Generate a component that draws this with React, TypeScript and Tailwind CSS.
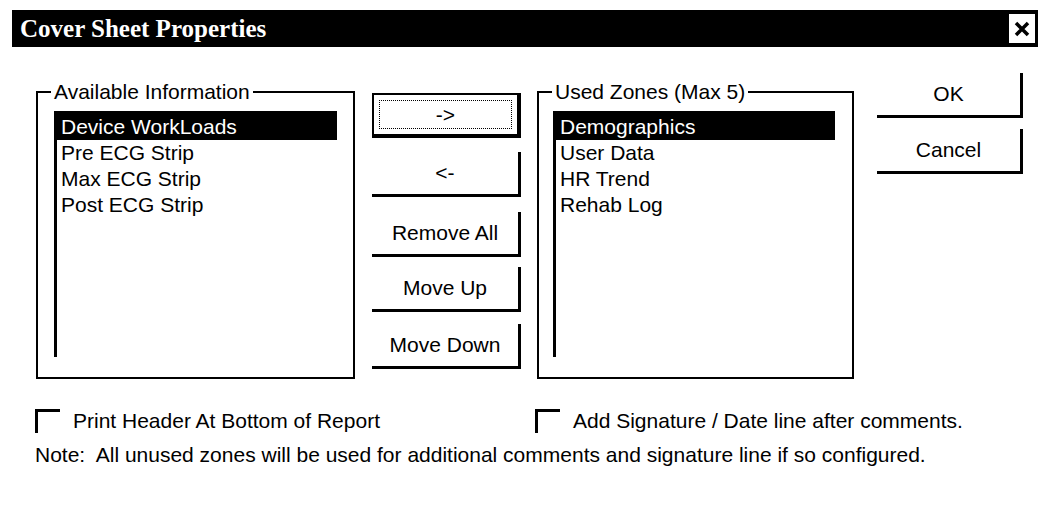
import React from 'react';

const availableItems = ['Device WorkLoads', 'Pre ECG Strip', 'Max ECG Strip', 'Post ECG Strip'];
const usedZones = ['Demographics', 'User Data', 'HR Trend', 'Rehab Log'];

function GroupBox({ title, width, children }: { title: string; width: string; children: React.ReactNode }) {
  return (
    <div className={`relative mt-[21px] h-[288px] border-2 border-black pt-[18px] ${width}`}>
      <span className="absolute -top-[13px] left-[13px] bg-white px-[3px] leading-[24px]">{title}</span>
      {children}
    </div>
  );
}

function ListBox({ items, selected, className }: { items: string[]; selected: number; className: string }) {
  return (
    <div className={`h-[246px] border-l-[3px] border-t-[3px] border-black ${className}`}>
      {items.map((item, i) => (
        <div
          key={item}
          className={`h-[26px] pl-[4px] leading-[26px] whitespace-nowrap ${i === selected ? 'bg-black text-white' : ''}`}
        >
          {item}
        </div>
      ))}
    </div>
  );
}

function Button({ label, className = '' }: { label: string; className?: string }) {
  return (
    <div className={`flex h-[45px] items-center justify-center border-r-[3px] border-b-[3px] border-black ${className}`}>
      {label}
    </div>
  );
}

function Checkbox({ label }: { label: string }) {
  return (
    <div className="flex items-center">
      <div className="h-[24px] w-[25px] border-l-[3px] border-t-[3px] border-black" />
      <span className="ml-[13px]">{label}</span>
    </div>
  );
}

export default function App() {
  return (
    <div className="h-[514px] w-[1038px] bg-white pl-[12px] pt-[10px] font-['Liberation_Sans',Arial,sans-serif] text-[21px] text-black">
      {/* Title bar */}
      <div className="flex h-[37px] items-center justify-between bg-black pl-[8px] pr-[3px]">
        <span className="font-['Liberation_Serif','Times_New_Roman',serif] text-[25px] font-bold text-white">
          Cover Sheet Properties
        </span>
        <div className="flex h-[29px] w-[26px] items-center justify-center bg-white">
          <svg width="16" height="16" viewBox="0 0 16 16">
            <path d="M2 2 L14 14 M14 2 L2 14" stroke="black" strokeWidth="3.5" />
          </svg>
        </div>
      </div>

      <div className="pl-[23px] pt-[23px]">
        <div className="flex items-start">
          <div className="ml-[1px]">
            <GroupBox title="Available Information" width="w-[319px]">
              <ListBox items={availableItems} selected={0} className="ml-[16px] w-[283px]" />
            </GroupBox>
          </div>

          {/* Move buttons */}
          <div className="ml-[17px] mt-[23px] flex w-[149px] flex-col">
            <div className="h-[45px] border-2 border-r-[4px] border-b-[4px] border-black p-[5px]">
              <div className="flex h-full items-center justify-center border border-dotted border-black">-&gt;</div>
            </div>
            <Button label="<-" className="mt-[14px]" />
            <Button label="Remove All" className="mt-[15px]" />
            <Button label="Move Up" className="mt-[10px]" />
            <Button label="Move Down" className="mt-[12px]" />
          </div>

          <div className="ml-[16px]">
            <GroupBox title="Used Zones (Max 5)" width="w-[317px]">
              <ListBox items={usedZones} selected={0} className="ml-[14px] w-[282px]" />
            </GroupBox>
          </div>

          <div className="ml-[23px] mt-[3px] flex w-[146px] flex-col">
            <Button label="OK" className="h-[44px]" />
            <Button label="Cancel" className="mt-[11px]" />
          </div>
        </div>

        <div className="mt-[26px] flex">
          <div className="w-[500px]">
            <Checkbox label="Print Header At Bottom of Report" />
          </div>
          <Checkbox label="Add Signature / Date line after comments." />
        </div>

        <p className="mt-[6px] leading-[24px] whitespace-pre">
          Note:  All unused zones will be used for additional comments and signature line if so configured.
        </p>
      </div>
    </div>
  );
}
